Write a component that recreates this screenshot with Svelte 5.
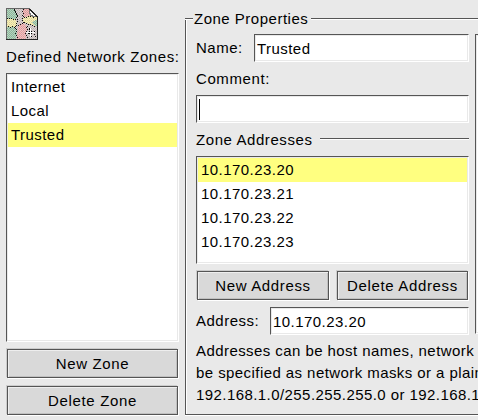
<script>
  const zones = ['Internet', 'Local', 'Trusted'];
  const addresses = ['10.170.23.20', '10.170.23.21', '10.170.23.22', '10.170.23.23'];
  const help = [
    'Addresses can be host names, network',
    'be specified as network masks or a plain',
    '192.168.1.0/255.255.255.0 or 192.168.1'
  ];
  const borders = [
    [9,0],[8,1],[8,2],[9,3],[9,4],[10,5],[10,6],[11,7],[11,8],[10,9],
    [1,10],[3,10],[5,10],[7,11],[9,11],[11,11],[11,13],[10,15],[10,17],[9,18],
    [2,18],[4,19],[6,18],[8,19],[9,20],[10,21],[10,23],[9,25],[10,27],[11,29],
    [17,1],[16,3],[17,5],[16,7],[17,8],[18,9],[20,9],[22,8],[24,8],[27,9],
    [16,10],[16,12],[17,14],[16,15],[14,16],[12,17],[18,14],[20,15],[22,16],[24,16],[26,17],[28,18],
    [21,18],[20,19],[21,21],[20,23],[19,25],[20,27],[21,29],[22,25],[28,26],[29,28]
  ];
</script>

<main>
  <aside>
    <svg class="logo" width="34" height="32" viewBox="0 0 34 32" shape-rendering="crispEdges">
      <defs>
        <pattern id="dither" width="2" height="2" patternUnits="userSpaceOnUse">
          <rect width="1" height="1" fill="#fff" opacity=".35" />
          <rect x="1" y="1" width="1" height="1" fill="#fff" opacity=".35" />
          <rect x="1" width="1" height="1" fill="#888" opacity=".2" />
        </pattern>
      </defs>
      <path d="M0 0h23l9 9v23H0z" fill="#c7bcbc" />
      <path d="M0 0h9l2 8-2 4H0z" fill="#8dbb9c" />
      <path d="M0 11h10l1 6-2 2H0z" fill="#eee39b" />
      <path d="M0 19h9l2 5-1 8H0z" fill="#8dbb9c" />
      <path d="M17 1h7v7l-5 2-2-4z" fill="#e39c9c" />
      <path d="M17 10l8-3 7 3v9l-15-5z" fill="#eee39b" />
      <path d="M26 14l6-3v8l-4-2z" fill="#8dbb9c" />
      <path d="M12 17l5-2 4 3-1 14h-9z" fill="#e8a1a1" />
      <path d="M0 0h23l9 9v23H0z" fill="url(#dither)" />
      {#each borders as [x, y]}<rect {x} {y} width="1" height="1" fill="#111" />{/each}
      <path d="M24 1l8 8h-5l-3-3z" fill="#f8f8f8" />
      <path d="M23 1h1v4h1v2h2v1h4v1h-5V8h-2V6h-1z" fill="#777" />
      <path d="M23 0h1v1h1v1h1v1h1v1h1v1h1v1h1v1h1v1h1v24h-1V9h-1V8h-1V7h-1V6h-1V5h-1V4h-1V3h-1V2h-1z" fill="#222" />
      <path d="M0 0h24v1H1v31H0z" fill="#666" />
      <path d="M0 31h32v1H0z" fill="#252525" />
      <path d="M24 20h1v9h-1zM20 24h9v1h-9z" fill="#fff" />
      <path d="M23 23h1v1h-1zM25 23h1v1h-1zM23 25h1v1h-1zM25 25h1v1h-1zM23 20h1v2h-1zM28 23h1v1h-1zM25 28h1v1h-1z" fill="#000" />
    </svg>
    <div class="heading">Defined Network Zones:</div>
    <div class="sunken zones">
      {#each zones as zone}
        <div class="row" class:selected={zone === 'Trusted'}>{zone}</div>
      {/each}
    </div>
    <button>New Zone</button>
    <button>Delete Zone</button>
  </aside>

  <section>
    <div class="legend"><i></i><span>Zone Properties</span><i class="rest"></i></div>
    <div class="content">
      <div class="column">
        <div class="field"><span>Name:</span><div class="sunken entry name">Trusted</div></div>
        <div class="comment">Comment:</div>
        <div class="sunken entry"><b class="caret"></b></div>
        <div class="subhead"><span>Zone Addresses</span><i class="rest"></i></div>
        <div class="sunken addresses">
          {#each addresses as address, i}
            <div class="row" class:selected={i === 0}>{address}</div>
          {/each}
        </div>
        <div class="actions"><button>New Address</button><button>Delete Address</button></div>
        <div class="field"><span>Address:</span><div class="sunken entry address">10.170.23.20</div></div>
      </div>
      <div class="sunken next"></div>
    </div>
    <div class="help">
      {#each help as line}<div>{line}</div>{/each}
    </div>
  </section>
</main>

<style>
  :global(body) { margin: 0; background: #e9e9e9; }
  main {
    width: 478px; height: 420px; overflow: hidden; box-sizing: border-box;
    display: flex; background: #e9e9e9; color: #000;
    font: 15px/20px "Liberation Sans", Arial, sans-serif;
    letter-spacing: 0.5px; white-space: nowrap; cursor: default;
  }
  main :is(div, button, section, aside) { box-sizing: border-box; }
  aside { width: 179px; flex: none; padding: 8px 0 0 6px; display: flex; flex-direction: column; }
  .logo { display: block; flex: none; }
  .heading { height: 33px; padding-top: 7px; letter-spacing: 0.57px; }
  .sunken {
    background: #fff; border: 1px solid; border-color: #555 #fff #fff #555;
    box-shadow: inset 1px 1px #e9e9e9, inset -1px -1px #e9e9e9;
  }
  .zones { height: 269px; padding: 1px; }
  .row { height: 24px; line-height: 23px; padding-left: 3px; letter-spacing: 0.45px; }
  .selected { background: #ffff80; }
  button {
    display: block; height: 29px; margin: 0; padding: 0; border: 1px solid #555; border-radius: 0;
    background: #d9d9d9; color: #000; font: inherit; letter-spacing: 0.65px; line-height: 27px;
    box-shadow: inset 1px 1px #eee, inset -1px -1px #c0c0c0, 1px 1px #fff, -1px -1px #ccc;
  }
  aside button { margin: 7px 1px 0; flex: none; }
  aside button + button { margin-top: 8px; }

  section {
    flex: none; margin-left: 6px; width: 320px; height: 407px; margin-top: 8px;
    display: flex; flex-direction: column;
    border-bottom: 1px solid #555; box-shadow: 0 1px #fff;
    background: linear-gradient(#555, #555) 0 10px / 1px 100% no-repeat,
      linear-gradient(#fff, #fff) 1px 11px / 1px 100% no-repeat;
  }
  .legend { display: flex; height: 26px; align-items: flex-start; }
  .legend i { width: 8px; height: 2px; margin-top: 10px; background: linear-gradient(#555 50%, #fff 50%); }
  .legend span { width: 118px; padding-left: 1px; box-sizing: border-box; line-height: 22px; }
  .legend .rest, .subhead .rest { flex: 1; height: 2px; background: linear-gradient(#555 50%, #fff 50%); }
  .content { display: flex; padding-left: 11px; height: 301px; }
  .column { width: 273px; flex: none; }
  .next { flex: none; margin-left: 6px; width: 60px; height: 300px; }
  .field { display: flex; height: 28px; line-height: 28px; }
  .entry { height: 28px; line-height: 27px; padding-left: 2px; letter-spacing: 0.45px; }
  .name { width: 215px; margin-left: auto; }
  .address { width: 199px; margin-left: auto; }
  .comment { height: 33px; padding-top: 7px; letter-spacing: 0.6px; }
  .caret { display: block; width: 1px; height: 21px; margin-top: 3px; background: #000; }
  .subhead { display: flex; height: 33px; }
  .subhead span { width: 124px; padding-top: 7px; letter-spacing: 0.58px; }
  .subhead .rest { margin-top: 15px; }
  .addresses { height: 108px; padding: 1px; }
  .actions { display: flex; gap: 8px; padding: 7px 1px; height: 43px; }
  .actions button:first-child { width: 132px; }
  .actions button:last-child { width: 131px; }
  .help { padding: 5px 0 0 11px; line-height: 22px; letter-spacing: 0.43px; }
</style>
